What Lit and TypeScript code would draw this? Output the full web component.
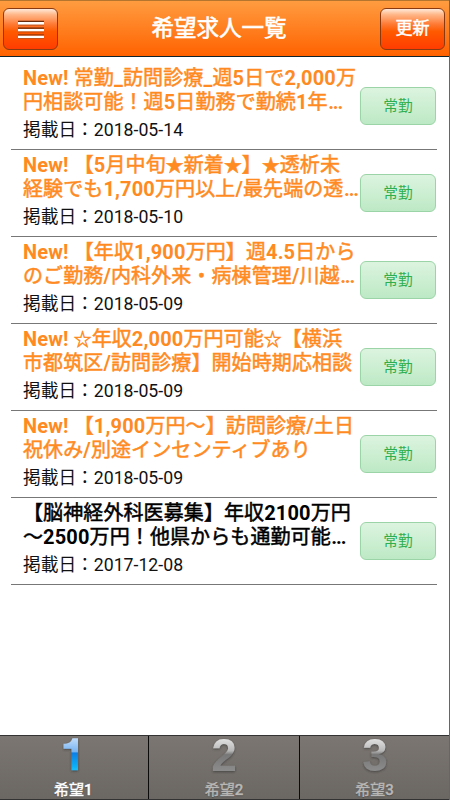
import { LitElement, html, css, svg } from "lit";
import { customElement } from "lit/decorators.js";

interface Job {
  lines: [string, string];
  date: string;
  isNew: boolean;
}

const JOBS: Job[] = [
  { lines: ["New! 常勤_訪問診療_週5日で2,000万", "円相談可能！週5日勤務で勤続1年..."], date: "2018-05-14", isNew: true },
  { lines: ["New! 【5月中旬★新着★】★透析未", "経験でも1,700万円以上/最先端の透..."], date: "2018-05-10", isNew: true },
  { lines: ["New! 【年収1,900万円】週4.5日から", "のご勤務/内科外来・病棟管理/川越..."], date: "2018-05-09", isNew: true },
  { lines: ["New! ☆年収2,000万円可能☆【横浜", "市都筑区/訪問診療】開始時期応相談"], date: "2018-05-09", isNew: true },
  { lines: ["New! 【1,900万円〜】訪問診療/土日", "祝休み/別途インセンティブあり"], date: "2018-05-09", isNew: true },
  { lines: ["【脳神経外科医募集】年収2100万円", "〜2500万円！他県からも通勤可能..."], date: "2017-12-08", isNew: false },
];

// Latin runs use true bold, Japanese runs a thickened regular weight;
// stars are a little narrower than the other full-width glyphs.
const runs = (text: string) =>
  text.split(/(\.{3}|[★☆]|[\x20-\x7e]+(?<!\.{3}))/).filter(Boolean).map((part) => {
    if (part === "...") return html`<b class="dots">${part}</b>`;
    if (/^[★☆]/.test(part)) return html`<span class="star">${part}</span>`;
    return /^[\x20-\x7e]/.test(part) ? html`<b>${part}</b>` : part;
  });

@customElement("app-root")
export class AppRoot extends LitElement {
  static styles = css`
    :host {
      display: flex;
      flex-direction: column;
      box-sizing: border-box;
      width: 450px;
      height: 800px;
      overflow: hidden;
      background: #fff;
      border-right: 1px solid #666;
      font-family: Roboto, "Noto Sans CJK JP", sans-serif;
      color: #111;
    }
    header {
      flex: none;
      box-sizing: border-box;
      height: 57px;
      padding: 0 4px 0 3px;
      display: flex;
      align-items: center;
      justify-content: space-between;
      border-top: 1px solid #b5752f;
      border-bottom: 1px solid #10242c;
      background: linear-gradient(#ff9c40, #ff6200);
    }
    h1 {
      margin: 0 0 2px 0;
      font-size: 22.5px;
      line-height: 30px;
      font-weight: 400;
      color: #fff;
      -webkit-text-stroke: 0.6px #fff;
    }
    .btn {
      box-sizing: border-box;
      height: 42px;
      border: 1px solid #8a3a10;
      border-radius: 6px;
      background: linear-gradient(#ffe9da 0%, #ffb788 14%, #ff7a34 38%, #ff5a00 56%, #ff3c00 100%);
      display: flex;
      align-items: center;
      justify-content: center;
      color: #fff;
      font-size: 17px;
      line-height: 20px;
      -webkit-text-stroke: 0.5px #fff;
    }
    .btn span { margin-bottom: 1px; }
    .menu { width: 55px; }
    .update { width: 65px; }
    main { flex: 1; padding: 6px 0 0 10.5px; }
    .row {
      box-sizing: border-box;
      width: 426.5px;
      height: 87px;
      padding: 3px 1px 0 12.5px;
      border-bottom: 1px solid #777;
      display: flex;
      align-items: flex-start;
      justify-content: space-between;
    }
    .line {
      height: 24px;
      line-height: 24px;
      font-size: 20px;
      letter-spacing: 0.1px;
      white-space: pre;
      -webkit-text-stroke: 0.5px currentColor;
      color: #000;
    }
    .new .line { color: #ff8a22; }
    .line b { font-weight: 700; letter-spacing: 0.15px; -webkit-text-stroke: 0; }
    .line .dots { letter-spacing: -1.1px; padding-left: 0.5px; }
    .star { font-size: 17.8px; }
    .text { width: 337px; flex: none; }
    .date { margin-top: 3.5px; font-size: 17.7px; line-height: 24px; white-space: pre; }
    .tag {
      flex: none;
      box-sizing: border-box;
      width: 76px;
      height: 38px;
      margin-top: 21px;
      border: 1px solid #9bd4a6;
      border-radius: 6px;
      background: linear-gradient(#dcf4df, #bde9c5);
      color: #2fae4e;
      font-size: 14.7px;
      line-height: 36px;
      text-align: center;
    }
    footer {
      flex: none;
      box-sizing: border-box;
      height: 65px;
      display: grid;
      grid-template-columns: 148px 151px 150px;
      border-top: 1px solid #333;
      border-bottom: 1px solid #333;
      background: linear-gradient(#7b7671, #6b6763);
    }
    .tab {
      display: flex;
      flex-direction: column;
      align-items: center;
      color: #b9b7b5;
      font-size: 15px;
      line-height: 18px;
      -webkit-text-stroke: 0.4px currentColor;
      text-shadow: 0 1px 1px #444;
    }
    .tab b { font-weight: 500; }
    .tab + .tab { border-left: 1px solid #0b0b0b; }
    .tab.on { color: #fff; }
    .tab svg { display: block; flex: none; overflow: visible; }
    .on svg, .on .label { margin-right: 1.5px; }
    .digit { font: 700 46px "Liberation Sans", Arial, sans-serif; -webkit-text-stroke: 0; text-shadow: none; }
    .label { margin-top: 2px; }
  `;

  private digit(n: number) {
    return svg`<svg width="40" height="43" viewBox="0 0 40 43">
      <defs>
        <linearGradient id=${"g" + n} gradientUnits="userSpaceOnUse" x1="0" y1="2" x2="0" y2="34">
          ${n === 1
            ? svg`<stop offset="0" stop-color="#c2ddfa"/><stop offset=".43" stop-color="#76b3f2"/><stop offset=".47" stop-color="#087ee5"/><stop offset="1" stop-color="#13bdfb"/>`
            : svg`<stop offset="0" stop-color="#e4e4e4"/><stop offset=".4" stop-color="#b8b8b8"/><stop offset=".52" stop-color="#777"/><stop offset="1" stop-color="#8b8b8b"/>`}
        </linearGradient>
        <filter id=${"s" + n}><feDropShadow dx="0" dy="1" stdDeviation=".8" flood-color="#333" flood-opacity=".7"/></filter>
      </defs>
      ${n === 1
        ? svg`<path d="M25 2.2V34.3H18.5V12.8H10.5V7.8C15.5 7.6 18.4 6 19.4 2.2Z" fill="url(#g1)" filter="url(#s1)"/>`
        : svg`<text class="digit" x="20" y="34.5" text-anchor="middle" fill=${`url(#g${n})`} filter=${`url(#s${n})`}>${n}</text>`}
    </svg>`;
  }

  render() {
    return html`
      <header>
        <div class="btn menu">
          <svg width="26" height="20" viewBox="0 0 26 20">
            <path d="M0 2.4h26M0 9.2h26M0 16h26" stroke="#6a2a0c" stroke-width="1.2"/>
            <path d="M0 4.4h26M0 11.2h26M0 18h26" stroke="#fff" stroke-width="2.6"/>
            <path d="M0 6.1h26M0 12.9h26M0 19.5h26" stroke="#a34512" stroke-width=".7"/>
          </svg>
        </div>
        <h1>希望求人一覧</h1>
        <div class="btn update"><span>更新</span></div>
      </header>
      <main>
        ${JOBS.map(
          (j) => html`<div class="row ${j.isNew ? "new" : ""}">
            <div class="text">
              ${j.lines.map((l) => html`<div class="line">${runs(l)}</div>`)}
              <div class="date">掲載日：${j.date}</div>
            </div>
            <div class="tag">常勤</div>
          </div>`
        )}
      </main>
      <footer>
        ${[1, 2, 3].map(
          (n) => html`<div class="tab ${n === 1 ? "on" : ""}">
            ${this.digit(n)}
            <div class="label">希望<b>${n}</b></div>
          </div>`
        )}
      </footer>
    `;
  }
}
